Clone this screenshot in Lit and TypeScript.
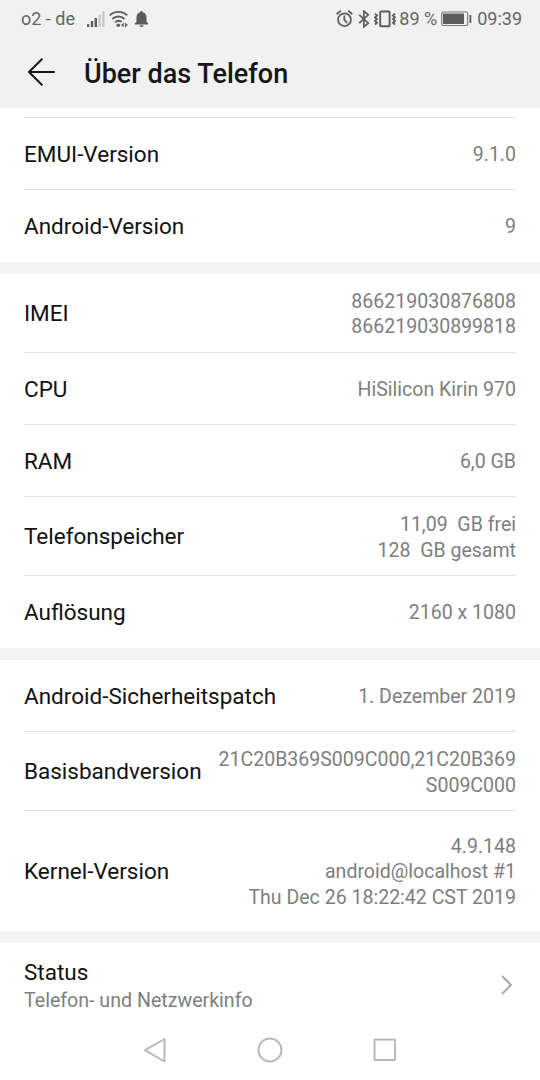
import { LitElement, html, css } from "lit";
import { customElement, property } from "lit/decorators.js";

interface Entry {
  label: string;
  lines: string[];
  height: number;
}

interface Section {
  entries: Entry[];
  gapAfter: number;
}

const sections: Section[] = [
  {
    gapAfter: 11,
    entries: [
      { label: "EMUI-Version", lines: ["9.1.0"], height: 72 },
      { label: "Android-Version", lines: ["9"], height: 72 },
    ],
  },
  {
    gapAfter: 12,
    entries: [
      { label: "IMEI", lines: ["866219030876808", "866219030899818"], height: 80 },
      { label: "CPU", lines: ["HiSilicon Kirin 970"], height: 72 },
      { label: "RAM", lines: ["6,0 GB"], height: 72 },
      { label: "Telefonspeicher", lines: ["11,09  GB frei", "128  GB gesamt"], height: 79 },
      { label: "Auflösung", lines: ["2160 x 1080"], height: 72 },
    ],
  },
  {
    gapAfter: 12,
    entries: [
      { label: "Android-Sicherheitspatch", lines: ["1. Dezember 2019"], height: 72 },
      { label: "Basisbandversion", lines: ["21C20B369S009C000,21C20B369", "S009C000"], height: 79 },
      { label: "Kernel-Version", lines: ["4.9.148", "android@localhost #1", "Thu Dec 26 18:22:42 CST 2019"], height: 120 },
    ],
  },
];

@customElement("status-bar")
export class StatusBar extends LitElement {
  static styles = css`
    :host { display: flex; align-items: center; height: 37px; padding: 0 18px 0 21px; color: #666; font-size: 18px; line-height: 37px; white-space: pre; }
    svg { display: block; flex: none; }
    .signal { margin-left: 12px; }
    .wifi { margin-left: 4px; }
    .bell { margin-left: 5px; }
    .space { flex: 1; }
    .bt { margin-left: 5px; }
    .vibrate { margin-left: 4px; }
    .percent { margin-left: 3px; }
    .battery { margin-left: 4px; }
    .time { margin-left: 5px; }
  `;
  render() {
    return html`
      <span>o2 - de</span>
      <svg class="signal" width="18" height="18" viewBox="0 0 18 18" fill="#5c5c5c">
        <rect x="0" y="14" width="2.3" height="3" rx=".6" /><rect x="3.8" y="11" width="2.4" height="6" rx=".6" /><rect x="7.6" y="8" width="2.4" height="9" rx=".6" />
        <rect x="11.4" y="4.5" width="2.4" height="12.5" rx=".6" fill="#c8c8c8" /><rect x="15.2" y="1" width="2.4" height="16" rx=".6" fill="#c8c8c8" />
      </svg>
      <svg class="wifi" width="20" height="18" viewBox="0 0 20 18" fill="none" stroke="#5c5c5c" stroke-width="1.9">
        <path d="M.8 5.4a12.6 12.6 0 0 1 17.4 0M3.4 9a8.8 8.8 0 0 1 12.2 0M6.2 12.2a5 5 0 0 1 6.4-.4" />
        <circle cx="9.3" cy="15.2" r="1.8" fill="#5c5c5c" stroke="none" />
        <path d="M14.7 12.6v5l-2.6-2.5zM16.1 12.6v5l2.8-2.5z" fill="#5c5c5c" stroke="none" />
      </svg>
      <svg class="bell" width="15" height="18" viewBox="0 0 15 18" fill="#5c5c5c">
        <path d="M7.5 1c.8 0 1.2.5 1.3 1.2 2.4.7 3.7 2.6 3.7 5.1v4.1l1.7 2v1H.8v-1l1.7-2V7.3c0-2.5 1.3-4.4 3.7-5.1C6.3 1.5 6.7 1 7.5 1zM5.5 15.3h4a2 1.7 0 0 1-4 0z" />
      </svg>
      <span class="space"></span>
      <svg width="17" height="18" viewBox="0 0 17 18" fill="none" stroke="#5c5c5c" stroke-width="1.8" stroke-linecap="round">
        <circle cx="8.5" cy="9.7" r="6.4" /><path d="M8.3 6.2v3.5l2.5 2.8M1.2 3.7l3-2.5M15.8 3.7l-3-2.5" />
      </svg>
      <svg class="bt" width="12" height="18" viewBox="0 0 12 18" fill="none" stroke="#5c5c5c" stroke-width="1.7">
        <path d="M1.2 4.8l9.1 8.3-4.4 3.7V1.2l4.4 3.7-9.1 8.3" />
      </svg>
      <svg class="vibrate" width="22" height="18" viewBox="0 0 22 18" fill="none" stroke="#5c5c5c">
        <rect x="6.2" y="1.5" width="9.4" height="14.8" rx=".9" stroke-width="1.9" />
        <path d="M1 3.7l2 1.8-2 1.8 2 1.8-2 1.8 2 1.8-2 1.8M21 3.7l-2 1.8 2 1.8-2 1.8 2 1.8-2 1.8 2 1.8" stroke-width="1.9" />
      </svg>
      <span class="percent">89 %</span>
      <svg class="battery" width="31" height="16" viewBox="0 0 31 16">
        <rect x=".7" y="1" width="26" height="13.5" rx="1.5" fill="none" stroke="#777" stroke-width="1.1" />
        <rect x="2" y="2.5" width="21" height="10.5" fill="#5c5c5c" /><rect x="28.5" y="4" width="1.8" height="8" rx=".5" fill="#5c5c5c" />
      </svg>
      <span class="time">09:39</span>
    `;
  }
}

@customElement("info-row")
export class InfoRow extends LitElement {
  @property({ attribute: false }) entry!: Entry;
  static styles = css`
    :host { display: flex; align-items: center; justify-content: space-between; box-sizing: border-box; margin: 0 24px; border-bottom: 1px solid #e2e2e2; }
    :host(.last) { border-bottom-color: transparent; }
    .label { color: #111; font-size: 22.5px; line-height: 30px; }
    .value { padding-top: 3px; color: #7e7e7e; font-size: 19.55px; line-height: 25.5px; text-align: right; white-space: pre; }
  `;
  render() {
    return html`<div class="label">${this.entry.label}</div>
      <div class="value">${this.entry.lines.map((l) => html`<div>${l}</div>`)}</div>`;
  }
}

@customElement("app-root")
export class AppRoot extends LitElement {
  static styles = css`
    :host { display: flex; flex-direction: column; height: 1080px; overflow: hidden; background: #fff; font-family: Roboto, sans-serif; }
    .top { background: #f1f1f1; height: 108px; flex: none; }
    .bar { display: flex; align-items: center; height: 71px; padding-left: 27px; }
    .bar svg { display: block; margin-bottom: 1px; }
    .title { margin: 0 0 0 29px; padding-top: 2px; color: #161616; font-size: 27px; line-height: 36px; font-weight: 500; }
    .rule { flex: none; height: 1px; margin: 9px 24px 0; background: #e2e2e2; }
    .band { flex: none; background: #f3f3f3; }
    .section { flex: none; }
    .status { display: flex; align-items: center; justify-content: space-between; height: 84px; padding: 0 27px 0 24px; flex: none; }
    .name { padding-top: 2px; color: #111; font-size: 22.5px; line-height: 30px; }
    .sub { color: #7e7e7e; font-size: 19.6px; line-height: 28px; }
    .nav { display: flex; justify-content: center; align-items: center; gap: 89px; height: 46px; flex: none; }
  `;
  render() {
    return html`
      <header class="top">
        <status-bar></status-bar>
        <div class="bar">
          <svg width="28" height="28" viewBox="0 0 28 28" fill="none" stroke="#161616" stroke-width="2" stroke-linecap="round" stroke-linejoin="round"><path d="M27 14H2M14.8 1.2L2 14l12.8 12.8" /></svg>
          <h1 class="title">Über das Telefon</h1>
        </div>
      </header>
      <div class="rule"></div>
      ${sections.map((s) => html`
        <section class="section">
          ${s.entries.map((e, i) => html`<info-row class=${i === s.entries.length - 1 ? "last" : ""} style="height:${e.height}px" .entry=${e}></info-row>`)}
        </section>
        <div class="band" style="height:${s.gapAfter}px"></div>`)}
      <div class="status">
        <div><div class="name">Status</div><div class="sub">Telefon- und Netzwerkinfo</div></div>
        <svg width="12" height="20" viewBox="0 0 12 20" fill="none" stroke="#a8a8a8" stroke-width="2" stroke-linecap="round" stroke-linejoin="round"><path d="M1.5 1.5L10 10l-8.5 8.5" /></svg>
      </div>
      <nav class="nav">
        <svg width="26" height="26" viewBox="0 0 26 26" fill="none" stroke="#b9b9b9" stroke-width="2" stroke-linejoin="round"><path d="M22.5 2v22.5L3 13.2z" /></svg>
        <svg width="26" height="26" viewBox="0 0 26 26" fill="none" stroke="#b9b9b9" stroke-width="2"><circle cx="13" cy="13" r="11.5" /></svg>
        <svg width="26" height="26" viewBox="0 0 26 26" fill="none" stroke="#b9b9b9" stroke-width="2"><rect x="2.5" y="2.5" width="20.5" height="20.5" rx=".5" /></svg>
      </nav>
    `;
  }
}
